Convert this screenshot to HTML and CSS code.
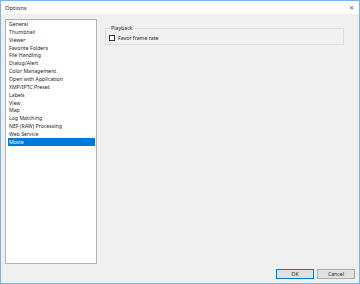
FILE: index.html
```html
<!DOCTYPE html>
<html lang="en">
<head>
    <meta charset="UTF-8">
    <title>Options</title>
    <link rel="stylesheet" href="styles.css">
</head>
<body>
    <div class="window">
        <!-- Title bar -->
        <div class="titlebar">
            <span class="title">Options</span>
            <span class="close">&#x2715;</span>
        </div>

        <div class="main">
            <ul class="category-list">
                <li>General</li>
                <li>Thumbnail</li>
                <li>Viewer</li>
                <li>Favorite Folders</li>
                <li>File Handling</li>
                <li>Dialog/Alert</li>
                <li>Color Management</li>
                <li>Open with Application</li>
                <li>XMP/IPTC Preset</li>
                <li>Labels</li>
                <li>View</li>
                <li>Map</li>
                <li>Log Matching</li>
                <li>NEF (RAW) Processing</li>
                <li>Web Service</li>
                <li class="selected">Movie</li>
            </ul>

            <div class="panel">
                <fieldset class="group">
                    <legend>Playback</legend>
                    <label class="check-row">
                        <span class="checkbox"></span>
                        Favor frame rate
                    </label>
                </fieldset>
            </div>
        </div>

        <div class="footer">
            <button class="btn default">OK</button>
            <button class="btn">Cancel</button>
        </div>
    </div>
</body>
</html>
```

FILE: styles.css
```css
body {
    margin: 0;
    font-family: 'Noto Sans', 'Open Sans', sans-serif;
    font-size: 5.2px;
    color: #222;
}

.window {
    width: 360px;
    height: 284px;
    box-sizing: border-box;
    border: 1px solid #7db4e8;
    background-color: #f0f0f0;
    display: flex;
    flex-direction: column;
}

.titlebar {
    height: 13px;
    background-color: #fff;
    display: flex;
    align-items: center;
    justify-content: space-between;
    padding: 1px 5px 0 4px;
}

.title {
    font-size: 5.8px;
}

.close {
    font-size: 6px;
    font-weight: 300;
    color: #555;
}

.main {
    display: flex;
    padding: 5px 0 0 4px;
}

.category-list {
    list-style: none;
    margin: 0;
    padding: 0;
    width: 92px;
    height: 245px;
    box-sizing: border-box;
    background-color: #fff;
    border: 1px solid #b4b4b4;
}

.category-list li {
    height: 7.87px;
    line-height: 8.6px;
    margin: 0 1px 0 2px;
    padding-left: 1px;
    white-space: nowrap;
}

.category-list li.selected {
    background-color: #0078d7;
    color: #fff;
}

.panel {
    flex: 1;
    padding: 5px 15px 0 8px;
}

.group {
    margin: 0;
    height: 21px;
    box-sizing: border-box;
    border: 1px solid #dcdcdc;
    padding: 0 3px;
}

.group legend {
    padding: 0 1px;
    margin-left: 1px;
}

.check-row {
    display: flex;
    align-items: center;
    gap: 3px;
    margin-top: 2px;
}

.checkbox {
    width: 6px;
    height: 6px;
    box-sizing: border-box;
    border: 1px solid #333;
    background-color: #fff;
}

.footer {
    display: flex;
    justify-content: flex-end;
    gap: 3px;
    padding: 5px 4px 4px 0;
}

.btn {
    width: 38px;
    height: 10px;
    box-sizing: border-box;
    padding: 0;
    font-family: inherit;
    font-size: 5.2px;
    line-height: 8px;
    background-color: #e1e1e1;
    border: 1px solid #adadad;
    color: #222;
}

.btn.default {
    border-color: #0078d7;
}
```
